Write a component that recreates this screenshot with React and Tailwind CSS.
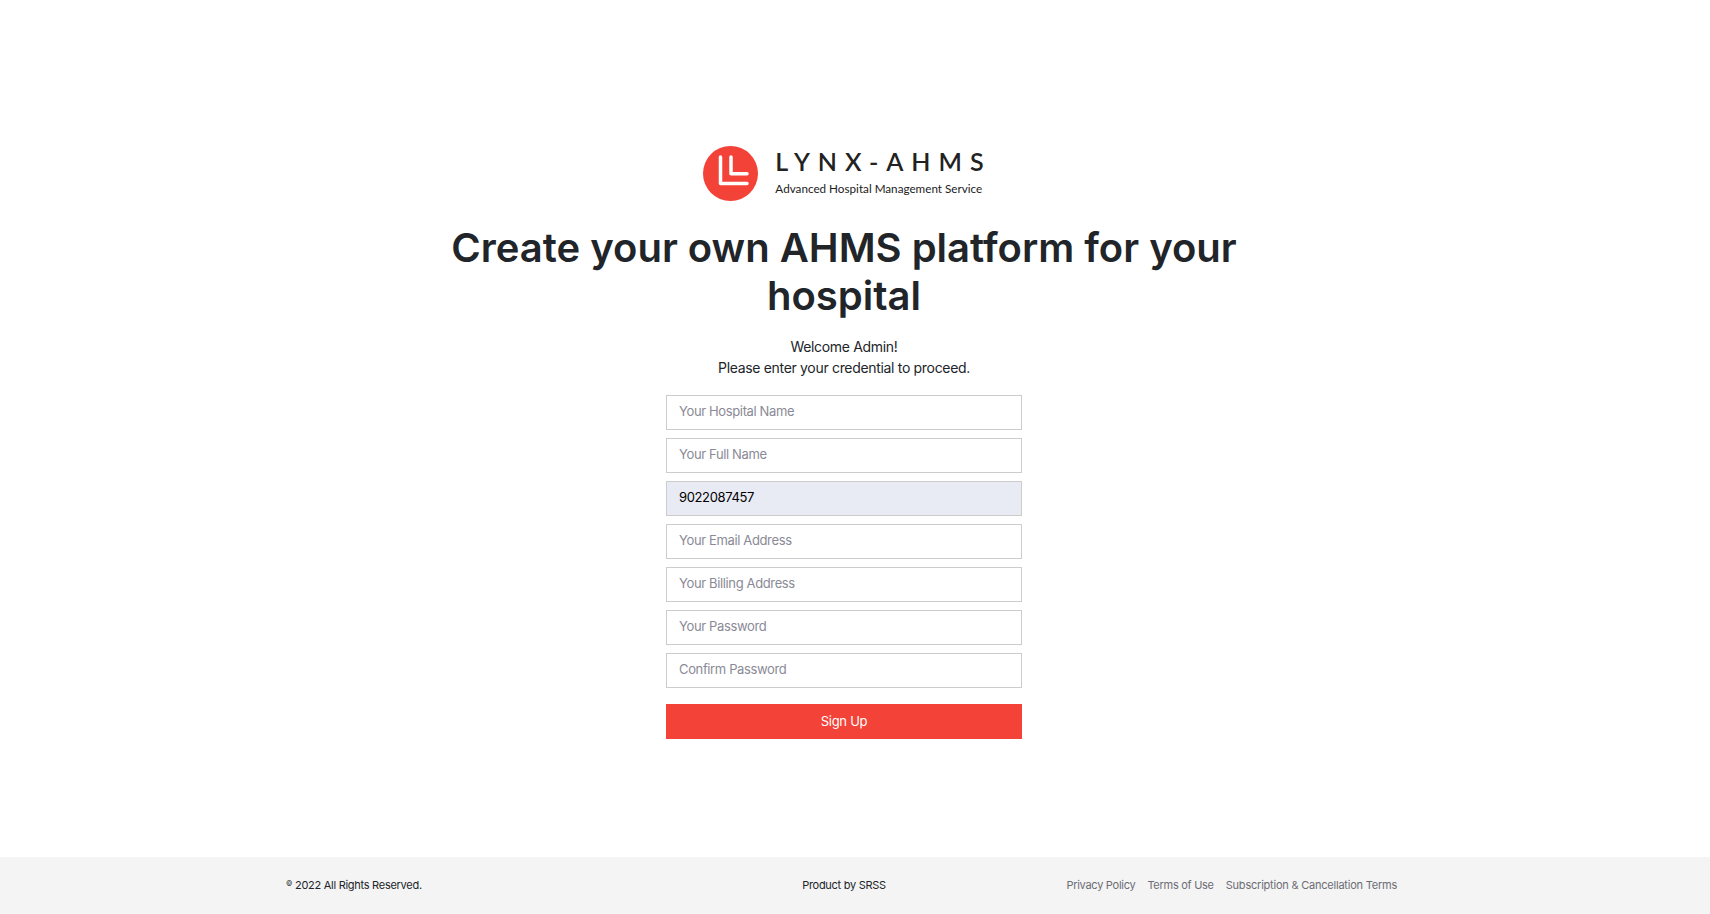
import React from 'react';

const fields = [
    { placeholder: 'Your Hospital Name' },
    { placeholder: 'Your Full Name' },
    { value: '9022087457', disabled: true },
    { placeholder: 'Your Email Address' },
    { placeholder: 'Your Billing Address' },
    { placeholder: 'Your Password', type: 'password' },
    { placeholder: 'Confirm Password', type: 'password' },
];

const Logo = () => (
    <div className="flex items-center ml-[7px]">
        <svg width="55" height="55" viewBox="0 0 55 55" className="block">
            <circle cx="27.5" cy="27.5" r="27.5" fill="#f34237" />
            <path d="M17.5 11 V37.5 H44 M28 11 V27.7 H44" fill="none" stroke="#fff" strokeWidth="3.5" strokeLinecap="round" strokeLinejoin="round" />
        </svg>
        <div className="ml-[17px] flex flex-col -mt-[5px]">
            <span className="font-['Lato',sans-serif] text-[25px] leading-[28px] font-semibold tracking-[0.32em] text-[#222] whitespace-nowrap">LYNX-AHMS</span>
            <span className="mt-[6px] font-['Lato',sans-serif] text-[11.7px] leading-[14px] text-[#222] whitespace-nowrap">Advanced Hospital Management Service</span>
        </div>
    </div>
);

export default function App() {
    return (
        <div className="min-h-[914px] flex flex-col bg-white font-['Inter',sans-serif]">
            <main className="flex-1 flex flex-col items-center pt-[146px] pr-[22px]">
                <Logo />
                <h1 className="mt-[23px] w-[800px] text-center text-[40px] leading-[48px] font-semibold text-[#212529]">
                    Create your own AHMS platform for your hospital
                </h1>
                <p className="mt-[16px] text-center text-[14px] leading-[21px] tracking-[-0.023em] text-[#212529]">
                    Welcome Admin!<br />Please enter your credential to proceed.
                </p>
                <form className="mt-[17px] w-[356px] flex flex-col gap-[8px]">
                    {fields.map((f, i) => (
                        <input
                            key={i}
                            type="text"
                            placeholder={f.placeholder}
                            defaultValue={f.value}
                            disabled={f.disabled}
                            className={`w-full h-[35px] px-[12px] pb-[3px] border border-[#ccc] text-[13px] tracking-[-0.028em] outline-none placeholder:text-[#8a8a96] ${f.disabled ? 'bg-[#e8ebf3] text-black' : 'bg-white'}`}
                        />
                    ))}
                    <button type="button" className="mt-[8px] h-[35px] bg-[#f34237] text-white text-[13px] tracking-[-0.02em]">Sign Up</button>
                </form>
            </main>
            <footer className="h-[57px] bg-[#f4f4f4] flex items-center pl-[286px] pr-[313px]">
                <div className="w-full grid grid-cols-[1fr_auto_1fr] items-center text-[11px] tracking-[-0.025em] text-[#212529]">
                    <span><sup className="text-[7px]">©</sup> 2022 All Rights Reserved.</span>
                    <span className="text-center ml-[5px]">Product by SRSS</span>
                    <div className="flex justify-end gap-[12px] text-[#6c6c74]">
                        <a>Privacy Policy</a>
                        <a>Terms of Use</a>
                        <a className="tracking-[-0.02em]">Subscription &amp; Cancellation Terms</a>
                    </div>
                </div>
            </footer>
        </div>
    );
}
